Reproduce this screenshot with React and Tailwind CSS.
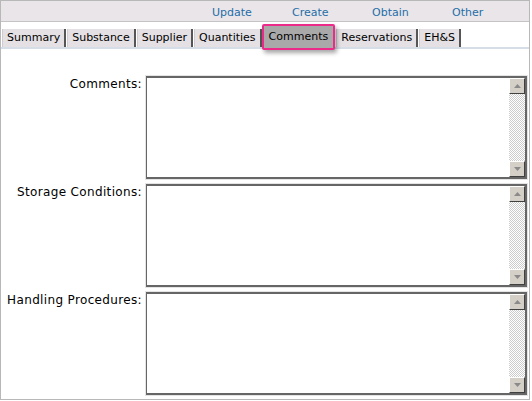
import React from "react";

const links = ["Update", "Create", "Obtain", "Other"];
const tabs = ["Summary", "Substance", "Supplier", "Quantities", "Comments", "Reservations", "EH&S"];
const fields = ["Comments:", "Storage Conditions:", "Handling Procedures:"];

const ScrollButton = ({ down }) => (
  <div className="w-[16px] h-[16px] bg-[#d4d0c8] border-t border-l border-t-white border-l-white border-r border-b border-r-[#404040] border-b-[#404040] flex items-center justify-center">
    <svg width="7" height="4" viewBox="0 0 7 4">
      {down ? <path d="M0 0h7L3.5 4z" fill="#8a8a8a" /> : <path d="M0 4h7L3.5 0z" fill="#8a8a8a" />}
    </svg>
  </div>
);

const FakeTextArea = () => (
  <div className="flex-1 h-[105px] border border-[#e4e4e4]">
    <div className="h-full bg-white border-t-2 border-r-2 border-b-2 border-l border-[#666] flex justify-end">
      <div className="w-[16px] h-full flex flex-col">
        <ScrollButton />
        <div className="flex-1 [background-image:repeating-conic-gradient(#cccccc_0%_25%,#ffffff_0%_50%)] [background-size:2px_2px]" />
        <ScrollButton down />
      </div>
    </div>
  </div>
);

export default function App() {
  return (
    <div className="w-[530px] h-[400px] border border-[#b8b8b8] bg-white text-black font-['DejaVu_Sans',Verdana,sans-serif]">
      <div className="h-[21px] bg-[#e9e5e9] border-b border-[#c4c4c4] flex items-center pt-[4px] pl-[211px]">
        {links.map((l) => (
          <div key={l} className="w-[80px] shrink-0 text-[11px] leading-[14px] text-[#1f6ea8]">
            {l}
          </div>
        ))}
      </div>

      <div className="pt-[7px] pl-[1px] flex items-start border-b-2 border-[#d5dde7]">
        {tabs.map((t) =>
          t === "Comments" ? (
            <div
              key={t}
              className="relative z-10 -mt-[5px] -mb-[4px] -ml-[1px] mr-[1px] h-[26px] px-[5px] flex items-center text-[11px] bg-[#a9a9a9] border-2 border-[#ec2a8a] rounded-[2px] shadow-[2px_3px_4px_rgba(0,0,0,0.35)]"
            >
              {t}
            </div>
          ) : (
            <div
              key={t}
              className="h-[18px] mr-[1px] pl-[4px] pr-[4px] flex items-center text-[11px] bg-[#e4e0e4] border-l border-[#cfcbcf] border-r-2 border-r-[#555]"
            >
              {t}
            </div>
          )
        )}
      </div>

      <div className="pt-[26px] flex flex-col gap-[3px] pr-[1px]">
        {fields.map((f) => (
          <div key={f} className="flex items-start gap-[3px]">
            <div className="w-[141px] shrink-0 text-right text-[12px] leading-[15px] tracking-[0.35px] pt-[2px]">{f}</div>
            <FakeTextArea />
          </div>
        ))}
      </div>
    </div>
  );
}
